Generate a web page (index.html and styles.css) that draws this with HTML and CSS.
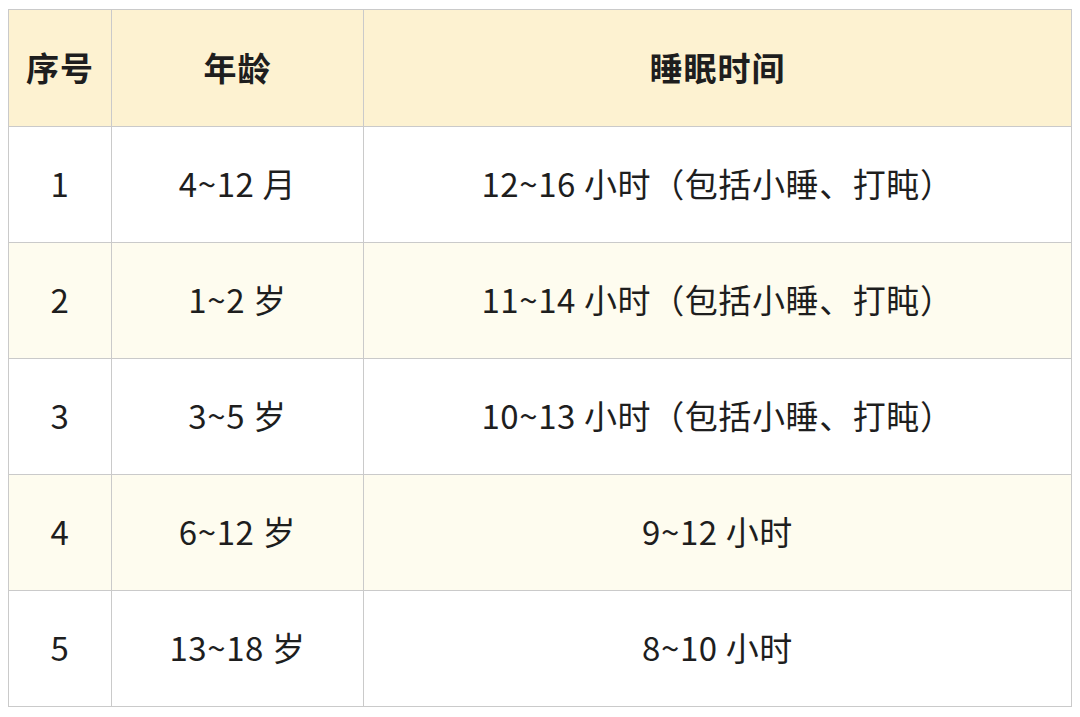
FILE: index.html
```html
<!DOCTYPE html>
<html lang="zh">
<head>
<meta charset="utf-8">
<link rel="stylesheet" href="styles.css">
</head>
<body>
<table class="sleep">
  <colgroup>
    <col class="c-no">
    <col class="c-age">
    <col class="c-time">
  </colgroup>
  <thead>
    <tr class="head"><th>序号</th><th>年龄</th><th>睡眠时间</th></tr>
  </thead>
  <tbody>
    <tr><td>1</td><td>4~12 月</td><td>12~16 小时（包括小睡、打盹）</td></tr>
    <tr class="alt"><td>2</td><td>1~2 岁</td><td>11~14 小时（包括小睡、打盹）</td></tr>
    <tr><td>3</td><td>3~5 岁</td><td>10~13 小时（包括小睡、打盹）</td></tr>
    <tr class="alt"><td>4</td><td>6~12 岁</td><td>9~12 小时</td></tr>
    <tr><td>5</td><td>13~18 岁</td><td>8~10 小时</td></tr>
  </tbody>
</table>
</body>
</html>
```
FILE: styles.css
```css
html, body {
  margin: 0;
  background: #ffffff;
}
body {
  padding: 9px 9px 0 8px;
  font-family: "Noto Sans CJK SC", "Noto Sans", sans-serif;
  color: #1e1e1e;
}
.sleep {
  border-collapse: collapse;
  table-layout: fixed;
  width: 1063px;
}
.c-no { width: 103px; }
.c-age { width: 252px; }
.c-time { width: 708px; }
.sleep th, .sleep td {
  border: 1px solid #cacaca;
  text-align: center;
  vertical-align: middle;
  padding: 0;
  font-size: 33px;
  line-height: 40px;
}
.sleep th {
  height: 114px;
  padding-bottom: 2px;
  font-weight: 700;
  letter-spacing: 1px;
}
.sleep td {
  height: 111px;
  padding-bottom: 4px;
  font-weight: 400;
  letter-spacing: 0.6px;
}
.head {
  background: #fdf2d1;
}
.alt {
  background: #fefcef;
}
```
